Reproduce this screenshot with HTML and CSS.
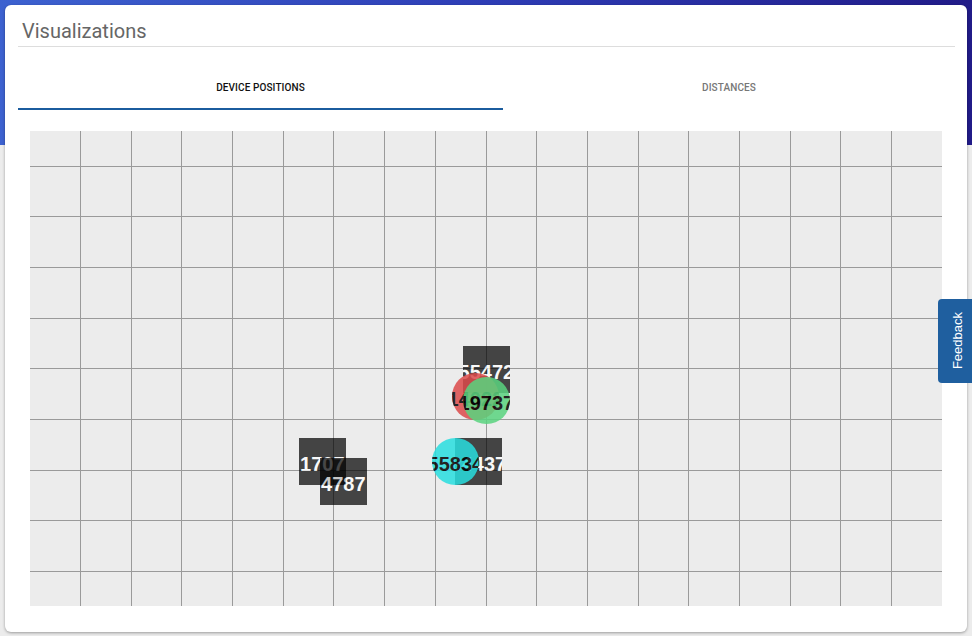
FILE: index.html
```html
<!DOCTYPE html>
<html>
<head>
<meta charset="utf-8">
<link rel="stylesheet" href="styles.css">
</head>
<body>
<div class="page">
  <div class="card">
    <div class="card-header"><span class="title">Visualizations</span></div>
    <div class="tabs">
      <div class="tab tab-active">DEVICE POSITIONS</div>
      <div class="tab">DISTANCES</div>
    </div>
    <div class="canvas">
      <svg class="grid" width="912" height="475" viewBox="0 0 912 475" shape-rendering="crispEdges">
        <g stroke="#9a9a9a" stroke-width="1">
          <line x1="50.5" y1="0" x2="50.5" y2="475"/>
          <line x1="101.5" y1="0" x2="101.5" y2="475"/>
          <line x1="151.5" y1="0" x2="151.5" y2="475"/>
          <line x1="202.5" y1="0" x2="202.5" y2="475"/>
          <line x1="253.5" y1="0" x2="253.5" y2="475"/>
          <line x1="303.5" y1="0" x2="303.5" y2="475"/>
          <line x1="354.5" y1="0" x2="354.5" y2="475"/>
          <line x1="405.5" y1="0" x2="405.5" y2="475"/>
          <line x1="456.5" y1="0" x2="456.5" y2="475"/>
          <line x1="506.5" y1="0" x2="506.5" y2="475"/>
          <line x1="557.5" y1="0" x2="557.5" y2="475"/>
          <line x1="608.5" y1="0" x2="608.5" y2="475"/>
          <line x1="658.5" y1="0" x2="658.5" y2="475"/>
          <line x1="709.5" y1="0" x2="709.5" y2="475"/>
          <line x1="760.5" y1="0" x2="760.5" y2="475"/>
          <line x1="810.5" y1="0" x2="810.5" y2="475"/>
          <line x1="861.5" y1="0" x2="861.5" y2="475"/>
          <line x1="0" y1="35.5" x2="912" y2="35.5"/>
          <line x1="0" y1="85.5" x2="912" y2="85.5"/>
          <line x1="0" y1="136.5" x2="912" y2="136.5"/>
          <line x1="0" y1="187.5" x2="912" y2="187.5"/>
          <line x1="0" y1="237.5" x2="912" y2="237.5"/>
          <line x1="0" y1="288.5" x2="912" y2="288.5"/>
          <line x1="0" y1="339.5" x2="912" y2="339.5"/>
          <line x1="0" y1="389.5" x2="912" y2="389.5"/>
          <line x1="0" y1="440.5" x2="912" y2="440.5"/>
        </g>
      </svg>
      <div class="marker square" style="left:269px;top:307px">1707</div>
      <div class="marker square" style="left:290px;top:327px">4787</div>
      <div class="marker square" style="left:433px;top:215px">55472</div>
      <div class="marker circle red" style="left:422px;top:242px">14022</div>
      <div class="marker circle green" style="left:433px;top:246px">19737</div>
      <div class="marker square" style="left:425px;top:307px">34437</div>
      <div class="marker circle cyan" style="left:402px;top:307px">55834</div>
    </div>
  </div>
</div>
<div class="feedback"><span class="feedback-text">Feedback</span></div>
</body>
</html>
```

FILE: styles.css
```css
html, body {
  margin: 0;
  padding: 0;
}
body {
  width: 972px;
  height: 636px;
  overflow: hidden;
  background: linear-gradient(90deg, #3d62d0 0%, #2e3db6 50%, #211b88 100%) no-repeat 0 0 / 100% 145px, #ececec;
  font-family: Roboto, "Liberation Sans", sans-serif;
  position: relative;
}
.page {
  padding: 5px;
}
.card {
  box-sizing: border-box;
  width: 962px;
  height: 627px;
  background: #fff;
  border-radius: 6px;
  box-shadow: 0 1px 3px rgba(0, 0, 0, 0.35);
  padding: 0 12px 26px 13px;
  display: flex;
  flex-direction: column;
}
.card-header {
  padding: 14px 0 3px 4px;
  border-bottom: 1px solid #dddddd;
}
.title {
  display: block;
  font-size: 20px;
  line-height: 24px;
  color: #666666;
  font-weight: 400;
}
.tabs {
  display: flex;
}
.tab {
  box-sizing: border-box;
  flex: 1;
  height: 63px;
  padding-top: 35px;
  font-size: 10px;
  line-height: 12px;
  font-weight: 500;
  text-align: center;
  color: #777777;
  letter-spacing: 0.1px;
  border-bottom: 2px solid transparent;
}
.tab-active {
  flex: 0 0 485px;
  color: #111111;
  border-bottom-color: #1b5c9e;
}
.canvas {
  position: relative;
  width: 912px;
  height: 475px;
  margin: 21px 13px 0 12px;
  background: #ececec;
  overflow: hidden;
}
.grid {
  display: block;
}
.marker {
  position: absolute;
  width: 46.7px;
  height: 46.7px;
  overflow: hidden;
  display: flex;
  justify-content: center;
  font-family: "Liberation Sans", Arial, sans-serif;
  font-weight: 700;
  font-size: 20px;
  line-height: 53px;
  white-space: nowrap;
}
.square {
  background: #000;
  color: #fff;
  opacity: 0.71;
}
.circle {
  border-radius: 50%;
  color: #000;
  opacity: 0.85;
}
.red {
  background: #dc4a4a;
}
.green {
  background: #5ad47f;
}
.cyan {
  background: #28dfe0;
}
.feedback {
  position: absolute;
  right: 0;
  top: 299px;
  width: 34px;
  height: 84px;
  background: #1f5f9f;
  border-radius: 4px 0 0 4px;
  display: flex;
  align-items: center;
  justify-content: center;
}
.feedback-text {
  writing-mode: vertical-rl;
  transform: rotate(180deg);
  color: #fff;
  font-family: "Liberation Sans", Arial, sans-serif;
  font-size: 13px;
  margin-left: 4px;
}
```
